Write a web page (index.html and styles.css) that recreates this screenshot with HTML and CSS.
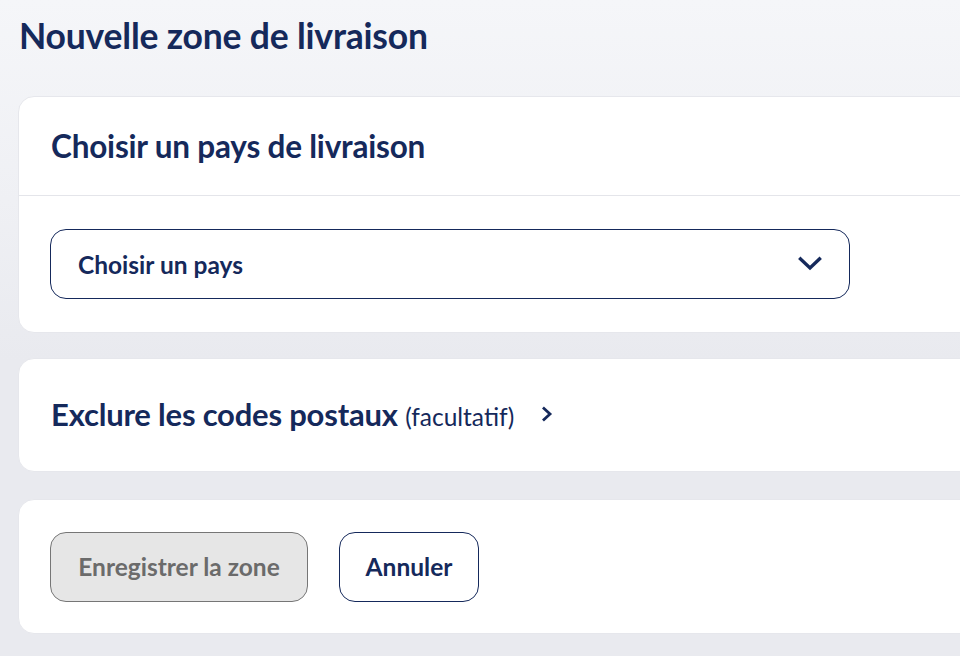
FILE: index.html
```html
<!DOCTYPE html>
<html lang="fr">
<head>
<meta charset="utf-8">
<title>Nouvelle zone de livraison</title>
<link rel="stylesheet" href="styles.css">
</head>
<body>
<main class="page">
  <h1 class="page-title">Nouvelle zone de livraison</h1>

  <section class="card">
    <header class="card-header">
      <h2 class="card-title">Choisir un pays de livraison</h2>
    </header>
    <div class="card-body">
      <button class="select" type="button">
        <span class="select-label">Choisir un pays</span>
        <svg class="select-chevron" width="26" height="18" viewBox="0 0 26 18" aria-hidden="true">
          <path d="M3.5 4 L13 13 L22.5 4" fill="none" stroke="currentColor" stroke-width="3.4" stroke-linecap="square"/>
        </svg>
      </button>
    </div>
  </section>

  <section class="card">
    <div class="card-row">
      <h2 class="card-title card-title-sm">Exclure les codes postaux <span class="optional">(facultatif)</span></h2>
      <svg class="row-chevron" width="12" height="18" viewBox="0 0 12 18" aria-hidden="true">
        <path d="M3 3.5 L9 9 L3 14.5" fill="none" stroke="currentColor" stroke-width="2.8" stroke-linecap="square"/>
      </svg>
    </div>
  </section>

  <section class="card card-footer">
    <div class="card-actions">
      <button class="btn btn-disabled" type="button" disabled>Enregistrer la zone</button>
      <button class="btn btn-outline" type="button">Annuler</button>
    </div>
  </section>
</main>
</body>
</html>
```

FILE: styles.css
```css
html, body {
  margin: 0;
  padding: 0;
  overflow: hidden;
}

body {
  width: 960px;
  height: 656px;
  background: linear-gradient(180deg, #f5f6f9 0px, #eff0f4 200px, #e9eaef 360px, #e9eaef 100%);
  font-family: "Lato", "Noto Sans", sans-serif;
  color: #15295b;
}

.page {
  width: 1200px;
  padding: 14px 0 0 18px;
  box-sizing: border-box;
  display: flex;
  flex-direction: column;
  gap: 25px;
}

.page-title {
  margin: 0 0 13px 1px;
  font-size: 35.5px;
  font-weight: 700;
  line-height: 44px;
  letter-spacing: -0.2px;
}

.card {
  background: #ffffff;
  border: 1px solid #e6e7ec;
  border-radius: 16px;
}

.card-footer {
  margin-top: 2px;
}

.card-header {
  height: 98px;
  padding: 0 32px;
  display: flex;
  align-items: center;
  border-bottom: 1px solid #e4e5ea;
}

.card-title {
  margin: 0;
  font-size: 31.5px;
  font-weight: 700;
  letter-spacing: -0.2px;
  line-height: 40px;
}

.card-title-sm {
  font-size: 31px;
}

.optional {
  font-size: 24.5px;
  font-weight: 400;
  letter-spacing: 0;
}

.card-body {
  padding: 33px 31px 33px;
}

.select {
  width: 800px;
  height: 70px;
  box-sizing: border-box;
  border: 1px solid #15295b;
  border-radius: 16px;
  background: #ffffff;
  padding: 0 26px 0 27px;
  display: flex;
  align-items: center;
  justify-content: space-between;
  font-family: inherit;
  color: #15295b;
}

.select-label {
  font-size: 24.5px;
  font-weight: 700;
}

.select-chevron {
  color: #15295b;
}

.card-row {
  height: 112px;
  padding: 0 32px;
  display: flex;
  align-items: center;
  gap: 27px;
}

.row-chevron {
  color: #15295b;
  margin-top: -2px;
}

.card-actions {
  height: 133px;
  padding: 0 31px;
  display: flex;
  align-items: center;
  gap: 31px;
}

.btn {
  height: 70px;
  box-sizing: border-box;
  border-radius: 16px;
  padding: 0;
  font-family: inherit;
  font-size: 24.5px;
  font-weight: 700;
}

.btn-disabled {
  width: 258px;
  background: #e6e6e6;
  border: 1px solid #767676;
  color: #6b6b6b;
}

.btn-outline {
  width: 140px;
  background: #ffffff;
  border: 1px solid #15295b;
  color: #15295b;
}
```
